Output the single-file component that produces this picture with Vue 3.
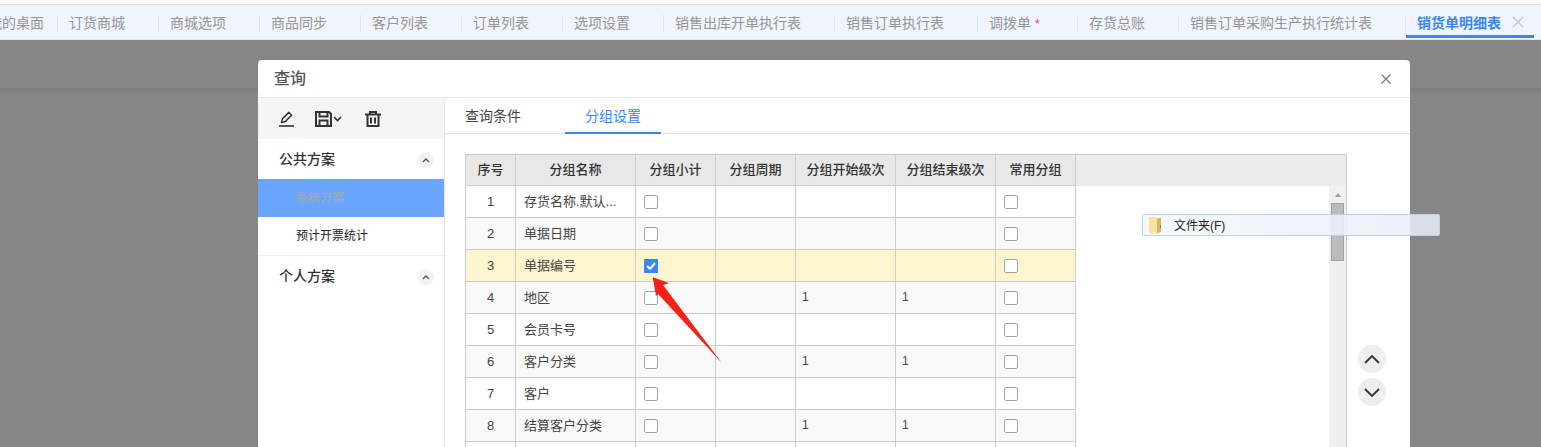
<script setup>
const tabs = [
  { label: '我的桌面', cut: true },
  { label: '订货商城' },
  { label: '商城选项' },
  { label: '商品同步' },
  { label: '客户列表' },
  { label: '订单列表' },
  { label: '选项设置' },
  { label: '销售出库开单执行表' },
  { label: '销售订单执行表' },
  { label: '调拨单', star: true },
  { label: '存货总账' },
  { label: '销售订单采购生产执行统计表' }
]
const headers = ['序号', '分组名称', '分组小计', '分组周期', '分组开始级次', '分组结束级次', '常用分组']
const rows = [
  { num: 1, name: '存货名称.默认...' },
  { num: 2, name: '单据日期' },
  { num: 3, name: '单据编号', checked: true, active: true },
  { num: 4, name: '地区', start: '1', end: '1' },
  { num: 5, name: '会员卡号' },
  { num: 6, name: '客户分类', start: '1', end: '1' },
  { num: 7, name: '客户' },
  { num: 8, name: '结算客户分类', start: '1', end: '1' },
  { num: '', name: '', blank: true }
]
</script>

<template>
  <div class="page">
    <header class="topbar">
      <div v-for="t in tabs" :key="t.label" class="tab" :class="{ cut: t.cut }">
        {{ t.label }}<span v-if="t.star" class="star">*</span>
      </div>
      <div class="tab-active">
        <span>销货单明细表</span>
        <svg class="tab-x" width="12" height="12" viewBox="0 0 12 12"><path d="M1 1l10 10M11 1L1 11" stroke="#c4c4c4" stroke-width="1.3" fill="none"/></svg>
      </div>
    </header>

    <main class="backdrop">
      <section class="dialog">
        <div class="dialog-head">
          <span class="dialog-title">查询</span>
          <svg width="10" height="10" viewBox="0 0 10 10"><path d="M.5.5l9 9M9.5.5l-9 9" stroke="#777" stroke-width="1.1" fill="none"/></svg>
        </div>
        <div class="dialog-body">
          <aside class="side">
            <div class="tools">
              <svg width="15" height="16" viewBox="0 0 15 16" fill="none" stroke="#333">
                <path d="M0 15h15" stroke-width="1.6"/>
                <path d="M2.5 11.500l.9-3.600L9.800 1.400l2.800 2.800-6.400 6.400z" stroke-width="1.500" stroke-linejoin="round"/>
              </svg>
              <span class="save">
                <svg width="17" height="16" viewBox="0 0 17 16" fill="none" stroke="#333" stroke-width="2">
                  <path d="M1 1h13l2 2v12H1z"/><path d="M4.500 1v4.500h8V1M4.500 15v-5.500h8V15"/>
                </svg>
                <svg width="9" height="6" viewBox="0 0 9 6" fill="none" stroke="#333" stroke-width="1.700"><path d="M1 1l3.500 3.500L8 1"/></svg>
              </span>
              <svg width="16" height="16" viewBox="0 0 16 16" fill="none" stroke="#333" stroke-width="2">
                <path d="M0 3.500h16M5 3.500V1h6v2.500M2.500 3.500V15h11V3.500M6 6.500v6M10 6.500v6"/>
              </svg>
            </div>
            <div class="group">
              <b>公共方案</b>
              <span class="fold"><svg width="8" height="5" viewBox="0 0 8 5" fill="none" stroke="#555" stroke-width="1.300"><path d="M1 4l3-3 3 3"/></svg></span>
            </div>
            <div class="plan selected">系统方案</div>
            <div class="plan last">预计开票统计</div>
            <div class="group">
              <b>个人方案</b>
              <span class="fold"><svg width="8" height="5" viewBox="0 0 8 5" fill="none" stroke="#555" stroke-width="1.300"><path d="M1 4l3-3 3 3"/></svg></span>
            </div>
          </aside>

          <div class="content">
            <nav class="subtabs">
              <span class="subtab">查询条件</span>
              <span class="subtab on">分组设置</span>
            </nav>
            <div class="workarea">
              <div class="grid">
                <div class="grid-head">
                  <div v-for="h in headers" :key="h" class="cell hcell">{{ h }}</div>
                </div>
                <div class="grid-body">
                  <div class="rows">
                    <div v-for="(r, i) in rows" :key="i" class="row" :class="{ alt: i % 2 === 1, act: r.active }">
                      <div class="cell num">{{ r.num }}</div>
                      <div class="cell name">{{ r.name }}</div>
                      <div class="cell box">
                        <span v-if="!r.blank" class="check" :class="{ on: r.checked }">
                          <svg v-if="r.checked" width="10" height="8" viewBox="0 0 10 8" fill="none" stroke="#fff" stroke-width="2"><path d="M1 4l3 2.800L9 1"/></svg>
                        </span>
                      </div>
                      <div class="cell"></div>
                      <div class="cell lvl">{{ r.start }}</div>
                      <div class="cell lvl">{{ r.end }}</div>
                      <div class="cell box"><span v-if="!r.blank" class="check"></span></div>
                    </div>
                  </div>
                  <div class="scroll">
                    <span class="scroll-up"></span>
                    <span class="thumb"></span>
                  </div>
                </div>
              </div>
              <div class="move">
                <span class="round"><svg width="16" height="9" viewBox="0 0 16 9" fill="none" stroke="#333" stroke-width="1.800"><path d="M1 8l7-7 7 7"/></svg></span>
                <span class="round"><svg width="16" height="9" viewBox="0 0 16 9" fill="none" stroke="#333" stroke-width="1.800"><path d="M1 1l7 7 7-7"/></svg></span>
              </div>
            </div>
          </div>
        </div>
      </section>
    </main>

    <div class="ctx">
      <span class="ctx-icon">
        <svg width="15" height="18" viewBox="0 0 15 18">
          <path d="M1 1h3l1 1h8v14H1z" fill="#e9cf7e"/>
          <path d="M8 3l5-1v14l-5 1.500z" fill="#d6b75f"/>
          <path d="M1 1h6.500l1.500 2v14.500H2.500L1 16z" fill="#f7e59e"/>
          <path d="M12 9h1v3h-1z" fill="#8f7a3a"/>
        </svg>
      </span>
      <span class="ctx-label">文件夹(F)</span>
    </div>

    <svg class="arrow" width="90" height="100" viewBox="0 0 90 100">
      <path d="M12.700 7.300L29 13 23 15 81.700 92.700 18 24 16 26z" fill="#f5221a"/>
    </svg>
  </div>
</template>

<style scoped>
.page {
  position: relative;
  width: 1541px;
  height: 447px;
  overflow: hidden;
  background: #fff;
  font-family: "Liberation Sans", "Noto Sans CJK SC", sans-serif;
  color: #333;
  padding-top: 4px;
  box-sizing: border-box;
  display: flex;
  flex-direction: column;
}
.topbar {
  height: 36px;
  flex: none;
  box-sizing: border-box;
  border-top: 1px solid #dcdcdc;
  border-bottom: 1px solid #e4e4e4;
  background: #f0f5fd;
  display: flex;
  align-items: stretch;
  white-space: nowrap;
}
.tab {
  position: relative;
  flex: none;
  box-sizing: border-box;
  padding: 0 34px 0 11px;
  font-size: 14px;
  line-height: 36px;
  color: #959595;
}
.tab::after {
  content: "";
  position: absolute;
  right: 0;
  top: 10px;
  height: 17px;
  width: 1px;
  background: #dfe3e8;
}
.tab.cut {
  margin-left: -12px;
  padding: 0 14px 0 0;
}
.star {
  display: inline-block;
  width: 9px;
  margin-left: 4px;
  color: #f33;
  font-size: 12px;
}
.tab-active {
  flex: none;
  width: 128px;
  height: 33px;
  box-sizing: border-box;
  padding: 3px 0 0 11px;
  border-bottom: 3px solid #3b86f7;
  display: flex;
  align-items: center;
  gap: 11px;
  font-size: 14px;
  font-weight: 700;
  color: #3b86f7;
}
.backdrop {
  flex: 1;
  min-height: 0;
  padding: 20px 131px 0 258px;
  background: linear-gradient(#868686 47px, #7d7d7d 49px, #868686 54px);
}
.dialog {
  height: 100%;
  background: #fff;
  border-radius: 4px 4px 0 0;
  display: flex;
  flex-direction: column;
  min-height: 420px;
}
.dialog-head {
  height: 37px;
  flex: none;
  border-bottom: 1px solid #e6e6e6;
  padding: 0 19px 0 16px;
  display: flex;
  align-items: center;
  justify-content: space-between;
}
.dialog-title {
  font-size: 16px;
  font-weight: 500;
  color: #555;
  margin-bottom: 3px;
}
.dialog-body {
  flex: 1;
  display: flex;
  min-height: 0;
}
.side {
  width: 187px;
  flex: none;
  box-sizing: border-box;
  border-right: 1px solid #e6e6e6;
}
.tools {
  height: 41px;
  background: #f5f5f5;
  display: flex;
  align-items: center;
  padding-left: 21px;
  gap: 21px;
}
.save {
  display: flex;
  align-items: center;
  gap: 1px;
  margin-right: 2px;
}
.group {
  height: 40px;
  box-sizing: border-box;
  padding: 0 10px 0 21px;
  display: flex;
  align-items: center;
  justify-content: space-between;
  font-size: 14px;
  color: #333;
}
.group b {
  font-weight: 500;
  margin-bottom: 3px;
}
.fold {
  width: 16px;
  height: 16px;
  margin-top: 2px;
  border-radius: 50%;
  background: #f2f2f2;
  display: flex;
  align-items: center;
  justify-content: center;
}
.plan {
  height: 38px;
  line-height: 38px;
  padding-left: 38px;
  font-size: 12px;
  color: #222;
}
.plan.selected {
  background: #6aa6ff;
  color: #a7a9a9;
}
.plan.last {
  height: 39px;
  border-bottom: 1px solid #f0f0f0;
  box-sizing: border-box;
}
.content {
  flex: 1;
  min-width: 0;
}
.subtabs {
  height: 36px;
  box-sizing: border-box;
  border-bottom: 1px solid #e3e3e3;
  display: flex;
}
.subtab {
  width: 96px;
  box-sizing: border-box;
  text-align: center;
  font-size: 14px;
  line-height: 36px;
  color: #444;
}
.subtab:first-child {
  width: 120px;
  text-align: left;
  padding-left: 20px;
}
.subtab.on {
  color: #3b86f7;
  border-bottom: 2px solid #3b86f7;
  height: 36px;
}
.workarea {
  padding: 20px 0 0 20px;
  display: flex;
  align-items: flex-start;
}
.grid {
  width: 882px;
  box-sizing: border-box;
  border: 1px solid #ccc;
  border-bottom: 0;
  flex: none;
}
.grid-head {
  display: flex;
  height: 31px;
  background: #ececec;
}
.hcell {
  background: #e8e8e8;
  border-bottom: 1px solid #ccc;
  font-weight: 500;
  font-size: 13px;
  line-height: 29px;
  text-align: center;
  color: #333;
}
.cell {
  flex: none;
  box-sizing: border-box;
  border-right: 1px solid #ccc;
  width: 80px;
  overflow: hidden;
  white-space: nowrap;
}
.cell:nth-child(1) { width: 50px; }
.cell:nth-child(2) { width: 120px; }
.cell:nth-child(5), .cell:nth-child(6) { width: 100px; }
.grid-body {
  display: flex;
  justify-content: space-between;
}
.rows { width: 610px; }
.row {
  display: flex;
  height: 32px;
  box-sizing: border-box;
  border-bottom: 1px solid #ccc;
  font-size: 13px;
  line-height: 31px;
  color: #444;
}
.row.alt { background: #f9f9f9; }
.row.act { background: #fdf5cd; }
.num { text-align: center; }
.name { padding-left: 8px; }
.lvl { padding-left: 6px; font-size: 12px; }
.box {
  display: flex;
  align-items: center;
  padding-left: 8px;
}
.check {
  width: 14px;
  height: 14px;
  box-sizing: border-box;
  border: 1px solid #a3a3a3;
  border-radius: 2px;
  background: #fff;
  display: flex;
  align-items: center;
  justify-content: center;
}
.check.on {
  background: #3b86f7;
  border-color: #3b86f7;
  border-radius: 0;
}
.scroll {
  width: 17px;
  background: #f0f0f0;
  height: 261px;
  flex: none;
  display: flex;
  flex-direction: column;
  align-items: center;
  padding-top: 7px;
  box-sizing: border-box;
}
.scroll-up {
  width: 0;
  height: 0;
  border: 3.5px solid transparent;
  border-top: 0;
  border-bottom: 4px solid #a0a0a0;
}
.thumb {
  width: 13px;
  height: 58px;
  margin-top: 6px;
  background: #bcbcbc;
  box-sizing: border-box;
  border: 1px solid #a0a0a0;
}
.move {
  margin: 191px 0 0 11px;
  display: flex;
  flex-direction: column;
  gap: 5px;
}
.round {
  width: 28px;
  height: 28px;
  border-radius: 50%;
  background: #eee;
  display: flex;
  align-items: center;
  justify-content: center;
}
.ctx {
  position: absolute;
  left: 1142px;
  top: 214px;
  width: 298px;
  height: 22px;
  box-sizing: border-box;
  border: 1px solid #b5d2ee;
  border-radius: 2px;
  background: linear-gradient(90deg, rgba(245,248,252,.9), rgba(232,238,248,.85));
  display: flex;
  align-items: center;
  font-size: 12px;
  color: #222;
}
.ctx-icon {
  width: 26px;
  height: 100%;
  flex: none;
  box-sizing: border-box;
  border-right: 1px solid #f5f7fb;
  display: flex;
  align-items: center;
  justify-content: center;
}
.ctx-label {
  margin: 0 0 2px 5px;
}
.arrow {
  position: absolute;
  left: 640px;
  top: 270px;
}
</style>

<style>
html, body { margin: 0; overflow: hidden; }
</style>
